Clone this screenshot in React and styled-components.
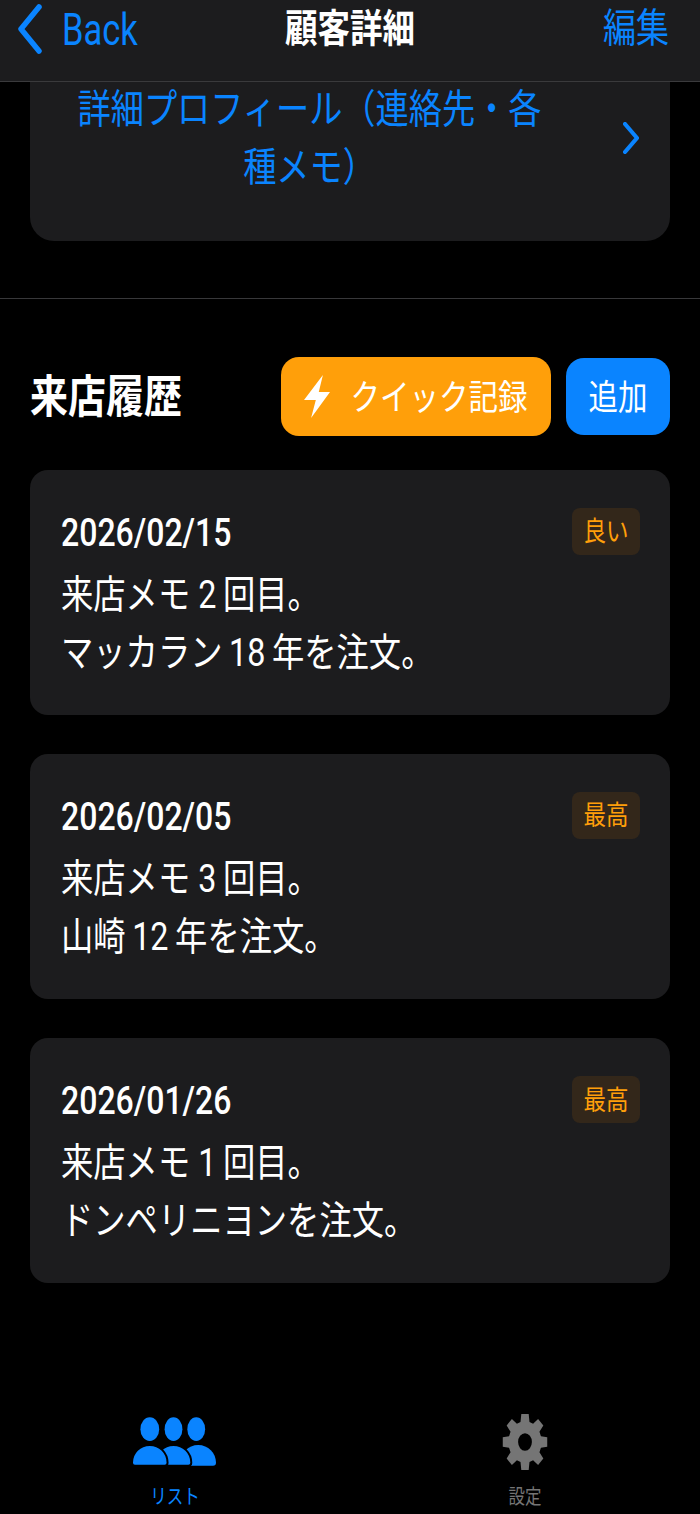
import React from "react";
import styled, { createGlobalStyle, css } from "styled-components";

const Global = createGlobalStyle`
  html, body { margin: 0; padding: 0; background: #000; }
  body { font-family: Roboto, "Noto Sans CJK JP", sans-serif; }
`;

const tall = css`
  display: inline-block;
  transform: scaleY(${(p) => p.$sy || 1.2});
  white-space: nowrap;
`;

const Page = styled.div`
  width: 700px; height: 1514px; background: #000; overflow: hidden;
  display: flex; flex-direction: column; color: #fff;
`;
const Nav = styled.header`
  height: 82px; box-sizing: border-box; background: #1c1c1e; border-bottom: 1px solid #3a3a3c;
  display: grid; grid-template-columns: 1fr auto 1fr; align-items: start; padding: 0 31px 0 31px; flex: none;
`;
const BackLink = styled.div`
  display: flex; align-items: center; gap: 20px; height: 56px; color: #0a84ff; margin: 1px 0 0 -13px;
`;
const BackLabel = styled.span`
  ${tall}; font-size: 34.5px; line-height: 54px;
`;
const NavTitle = styled.h1`
  ${tall}; margin: 1px 0 0; font-size: 32.5px; line-height: 56px; font-weight: 700;
`;
const NavEdit = styled.span`
  ${tall}; justify-self: end; font-size: 33px; line-height: 56px; color: #0a84ff; margin-top: 1px;
`;
const ProfileCard = styled.section`
  margin: 0 30px; height: 159px; box-sizing: border-box; background: #1c1c1e;
  border-radius: 0 0 24px 24px; display: flex; align-items: flex-start; padding: 0 31px 0 31px; flex: none;
`;
const ProfileText = styled.div`
  flex: 1; text-align: center; color: #0a84ff; font-size: 33.2px; line-height: 58px;
  margin: -1px 65px 0 0;
`;
const ProfileLine = styled.div`
  ${tall};
`;
const ProfileChevron = styled.svg`
  width: 16px; height: 32px; margin-top: 40px; flex: none;
`;
const Divider = styled.hr`
  margin: 57px 0 0; border: 0; height: 1px; background: #38383a; flex: none;
`;
const SectionHead = styled.div`
  display: flex; align-items: center; gap: 15px; margin: 58px 30px 0; height: 79px; flex: none;
`;
const SectionTitle = styled.h2`
  ${tall}; margin: 2px auto 0 0; font-size: 38px; font-weight: 700; line-height: 79px;
`;
const Button = styled.button`
  height: ${(p) => p.$h}px; border: 0; color: #fff; background: ${(p) => p.$bg};
  border-radius: 18px; font: inherit; padding: 0; display: flex; align-items: center; justify-content: center;
  width: ${(p) => p.$w}px; gap: 20px;
`;
const ButtonLabel = styled.span`
  ${tall}; font-size: 29.5px; line-height: 50px; margin-top: 2px;
`;
const History = styled.div`
  display: flex; flex-direction: column; gap: 39px; margin: 34px 30px 0; flex: none;
`;
const VisitCard = styled.article`
  height: 245px; box-sizing: border-box; background: #1c1c1e; border-radius: 18px; padding: 38px 30px 0 31px;
`;
const VisitHead = styled.div`
  display: flex; justify-content: space-between; align-items: flex-start; height: 58px;
`;
const VisitDate = styled.span`
  ${tall}; font-size: 32px; font-weight: 500; line-height: 48px; margin-top: 1px;
`;
const Badge = styled.span`
  width: 68px; height: 47px; background: #33271a; border-radius: 8px; color: #ff9f0a;
  display: flex; align-items: center; justify-content: center;
`;
const BadgeText = styled.span`
  ${tall}; font-size: 22.5px; line-height: 47px; margin-top: 2px;
`;
const VisitLine = styled.div`
  line-height: 58px; font-size: 32.3px; height: 58px;
`;
const VisitText = styled.span`
  ${tall};
`;
const TabBar = styled.nav`
  flex: 1; display: grid; grid-template-columns: 1fr 1fr; padding-top: 130px;
`;
const Tab = styled.div`
  display: flex; flex-direction: column; align-items: center; color: ${(p) => p.$c};
`;
const TabIcon = styled.div`
  height: 68px; box-sizing: border-box; padding-top: ${(p) => p.$top || 0}px;
`;
const TabLabel = styled.span`
  ${tall}; font-size: 16.5px; line-height: 34px;
`;

const gearPath = (() => {
  const n = 8, cx = 50, cy = 50;
  let d = "";
  for (let i = 0; i < n; i++) {
    const a = (i / n) * Math.PI * 2 - Math.PI / 2;
    const w = Math.PI / n;
    const pts = [
      [36, a - w * 0.7], [49, a - w * 0.42], [49, a + w * 0.42], [36, a + w * 0.7],
    ];
    pts.forEach(([r, t], j) => {
      d += `${i === 0 && j === 0 ? "M" : "L"}${(cx + r * Math.cos(t)).toFixed(2)} ${(cy + r * Math.sin(t)).toFixed(2)}`;
    });
  }
  return d + "Z M50 35a15 15 0 1 0 0 30a15 15 0 1 0 0-30Z";
})();

const UsersIcon = () => (
  <svg width="84" height="49" viewBox="0 0 85 49" fill="#0a84ff" stroke="#000" strokeWidth="2" style={{ display: "block", marginLeft: "-2px" }}>
    <ellipse cx="18" cy="12" rx="9.500" ry="12" stroke="none" />
    <ellipse cx="42" cy="12" rx="9" ry="12" stroke="none" />
    <ellipse cx="65" cy="12" rx="9" ry="12" stroke="none" />
    <path d="M49 46c0-10 8-18 18-18s18 8 18 18c0 2-1 3-3 3H52c-2 0-3-1-3-3Z" stroke="none" />
    <path d="M24 46c0-10 8-18 18-18s18 8 18 18c0 2-1 3-3 3H27c-2 0-3-1-3-3Z" />
    <path d="M0 46c0-10 8-18 18-18s18 8 18 18c0 2-1 3-3 3H3c-2 0-3-1-3-3Z" />
  </svg>
);

const visits = [
  { date: "2026/02/15", rate: "良い", l1: "来店メモ\u00a02\u2009回目。", l2: "マッカラン\u200918\u2009年を注文。" },
  { date: "2026/02/05", rate: "最高", l1: "来店メモ\u00a03\u2009回目。", l2: "山崎\u200912\u2009年を注文。" },
  { date: "2026/01/26", rate: "最高", l1: "来店メモ\u00a01\u2009回目。", l2: "ドンペリニヨンを注文。" },
];

export default function App() {
  return (
    <Page>
      <Global />
      <Nav>
        <BackLink>
          <svg width="24" height="50" viewBox="0 0 24 50" fill="none" stroke="#0a84ff" strokeWidth="5.500" strokeLinecap="round" strokeLinejoin="round">
            <path d="M21 3 3 25l18 22" />
          </svg>
          <BackLabel $sy={1.3}>Back</BackLabel>
        </BackLink>
        <NavTitle>顧客詳細</NavTitle>
        <NavEdit>編集</NavEdit>
      </Nav>
      <ProfileCard>
        <ProfileText>
          <ProfileLine>詳細プロフィール（連絡先・各</ProfileLine>
          <ProfileLine>種メモ）</ProfileLine>
        </ProfileText>
        <ProfileChevron viewBox="0 0 16 32" fill="none" stroke="#0a84ff" strokeWidth="4.200" strokeLinecap="round" strokeLinejoin="round">
          <path d="M2 2 14 16 2 30" />
        </ProfileChevron>
      </ProfileCard>
      <Divider />
      <SectionHead>
        <SectionTitle>来店履歴</SectionTitle>
        <Button $bg="#ff9f0a" $h={79} $w={270}>
          <svg width="26" height="43" viewBox="0 0 22 43" preserveAspectRatio="none" fill="#fff">
            <path d="M16 0 0 25h10L6 43 22 17H12.500Z" />
          </svg>
          <ButtonLabel>クイック記録</ButtonLabel>
        </Button>
        <Button $bg="#0a84ff" $h={77} $w={104}>
          <ButtonLabel>追加</ButtonLabel>
        </Button>
      </SectionHead>
      <History>
        {visits.map((v) => (
          <VisitCard key={v.date}>
            <VisitHead>
              <VisitDate>{v.date}</VisitDate>
              <Badge><BadgeText>{v.rate}</BadgeText></Badge>
            </VisitHead>
            <VisitLine><VisitText>{v.l1}</VisitText></VisitLine>
            <VisitLine><VisitText>{v.l2}</VisitText></VisitLine>
          </VisitCard>
        ))}
      </History>
      <TabBar>
        <Tab $c="#0a84ff">
          <TabIcon $top={4}><UsersIcon /></TabIcon>
          <TabLabel $sy={1.25}>リスト</TabLabel>
        </Tab>
        <Tab $c="#757575">
          <TabIcon>
            <svg width="46" height="58" viewBox="0 0 100 100" preserveAspectRatio="none" fill="#757575" fillRule="evenodd" style={{ display: "block" }}>
              <path d={gearPath} />
            </svg>
          </TabIcon>
          <TabLabel $sy={1.25}>設定</TabLabel>
        </Tab>
      </TabBar>
    </Page>
  );
}
